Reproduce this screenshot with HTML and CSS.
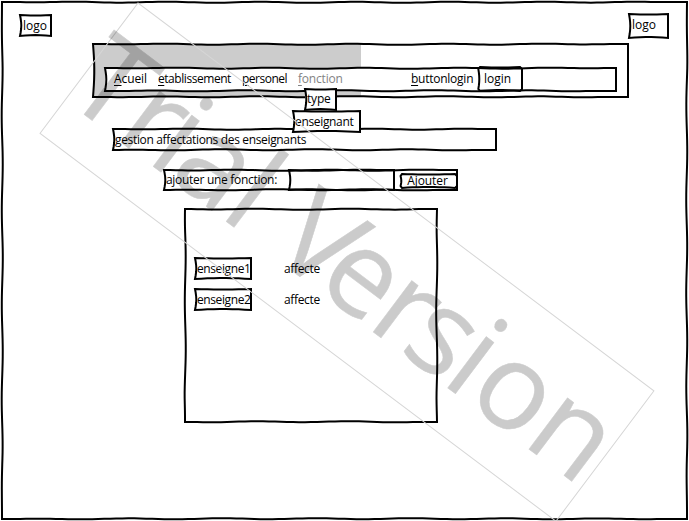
FILE: index.html
```html
<!DOCTYPE html>
<html lang="fr">
<head>
<meta charset="utf-8">
<title>Gestion affectations des enseignants</title>
<link rel="stylesheet" href="styles.css">
</head>
<body>
<main class="page sketch">
  <header class="top">
    <div class="logo sketch"><span>logo</span></div>
    <div class="banner sketch">
      <nav class="menubar sketch">
        <a class="item acueil"><u>A</u>cueil</a>
        <a class="item etab"><u>e</u>tablissement</a>
        <a class="item pers"><u>p</u>ersonel</a>
        <a class="item fonction"><u>f</u>onction</a>
        <a class="item blogin"><u>b</u>uttonlogin</a>
        <button class="login sketch round"><span>login</span></button>
        <div class="submenu">
          <div class="type sketch"><span>type</span></div>
          <div class="enseignant sketch"><span>enseignant</span></div>
        </div>
      </nav>
    </div>
    <div class="logo right sketch"><span>logo</span></div>
  </header>
  <h1 class="title sketch"><span>gestion affectations des enseignants</span></h1>
  <form class="add sketch">
    <label><span>ajouter une fonction:</span></label>
    <div class="field sketch"></div>
    <button type="button" class="submit sketch round"><span>Ajouter</span></button>
  </form>
  <section class="panel sketch">
    <div class="row"><div class="name sketch"><span>enseigne1</span></div><span class="state">affecte</span></div>
    <div class="row"><div class="name sketch"><span>enseigne2</span></div><span class="state">affecte</span></div>
  </section>
</main>
<svg class="watermark" width="689" height="521" viewBox="0 0 689 521">
  <g transform="translate(138 3) rotate(36.94)">
    <rect x="0" y="0" width="645.5" height="163"/>
    <text x="-4 60 100 127 191.5 220 253 311 375.5 416 468.7 499 570.4" y="121.5">Trial Version</text>
  </g>
</svg>
<script src="sketch.js"></script>
</body>
</html>
```
FILE: styles.css
```css
* { box-sizing: border-box; }
body {
  margin: 0;
  padding: 2px;
  width: 689px;
  height: 521px;
  overflow: hidden;
  position: relative;
  background: #fff;
  color: #000;
  font: 12px/16px "Open Sans", "Noto Sans", sans-serif;
  letter-spacing: -0.34px;
}
.page { width: 685px; height: 517px; }
.sketch { position: relative; }
.outline {
  position: absolute;
  left: 0;
  top: 0;
  overflow: visible;
  fill: none;
  stroke: #000;
  stroke-width: 2;
  pointer-events: none;
}
.top { display: flex; align-items: flex-start; height: 127px; padding-left: 18px; }
.logo { width: 31px; height: 21px; margin-top: 13px; padding: 3px 0 0 3px; letter-spacing: 0; }
.logo.right { width: 39px; height: 24px; margin: 12px 0 0 1px; }
.banner {
  width: 535px;
  height: 53px;
  margin: 42px 0 0 42px;
  padding: 24px 12px 6px;
  background: linear-gradient(to right, #ccc 268px, #fff 268px);
}
.menubar { display: flex; height: 23px; background: #fff; padding-left: 9px; }
.item { padding-top: 3px; white-space: nowrap; flex: none; }
.acueil { width: 44px; letter-spacing: -0.1px; }
.etab { width: 84px; letter-spacing: -0.45px; }
.pers { width: 56px; letter-spacing: -0.5px; }
.fonction { width: 113px; color: #838383; letter-spacing: -0.2px; }
.blogin { width: 67px; letter-spacing: -0.25px; }
u { text-decoration: underline; text-underline-offset: 2px; text-decoration-thickness: 1px; }
button { font: inherit; letter-spacing: 0; border: 0; padding: 0; margin: 0; background: #fff; color: #000; border-radius: 3px; }
.login { width: 44px; height: 24px; margin-top: -1px; text-align: left; padding: 0 0 0 6px; }
.submenu { position: absolute; left: 188px; top: 21px; z-index: 2; }
.type { width: 31px; height: 21px; margin-left: 12px; padding: 2px; background: #fff; letter-spacing: -0.2px; }
.enseignant { width: 67px; height: 21px; margin-top: 1px; padding: 3px 2px 0; background: #fff; }
.title { width: 383px; height: 21px; margin: 0 0 0 111px; padding: 3px 2px 0; font: inherit; }
.add { display: flex; width: 293px; height: 20px; margin: 20px 0 0 162px; }
.add label { width: 125px; padding: 2px 0 0 2px; white-space: nowrap; letter-spacing: -0.3px; }
.field { width: 105px; height: 20px; background: #fff; }
.submit { width: 57px; height: 14px; margin: 4px 0 0 6px; padding-right: 2px; line-height: 11px; letter-spacing: -0.1px; }
.submit span { position: relative; top: -1px; }
.panel { width: 252px; height: 213px; margin: 19px 0 0 183px; padding: 49px 0 0 10px; }
.row { display: flex; height: 31px; }
.name { width: 56px; height: 21px; padding: 3px 2px 0 2px; letter-spacing: -0.4px; }
.state { margin: 3px 0 0 33px; }
.watermark { position: absolute; left: 0; top: 0; z-index: 5; letter-spacing: 0; }
.watermark rect { fill: none; stroke: #d6d6d6; stroke-width: 1; }
.watermark text { font: 120px "Open Sans", sans-serif; fill: #000; stroke: #000; stroke-width: .5; opacity: .2; }
```
FILE: sketch.js
```js
// Draws a slightly wavering, hand-drawn outline around every .sketch box.
const NS = "http://www.w3.org/2000/svg";

function offset(side, d, len) {
  const t = d / len;
  if (len > 100) return Math.sin(Math.PI * t) * 0.3 + Math.sin(d / 15 + side) * 0.5 * Math.min(1, t * 8, (1 - t) * 8);
  const bow = [0.5, 0, 1, 1.3][side];
  return Math.sin(Math.PI * t) * bow;
}

document.querySelectorAll(".sketch").forEach(el => {
  const w = el.offsetWidth, h = el.offsetHeight;
  const r = el.classList.contains("round") ? 2 : 0;
  const pts = [];
  const add = (side, len, map) => {
    const n = Math.max(6, Math.round(len / 6));
    for (let i = 0; i <= n; i++) {
      const d = r + (len - 2 * r) * i / n;
      pts.push(map(d, offset(side, d, len)).map(v => v.toFixed(2)).join(" "));
    }
  };
  add(0, w, (d, o) => [d, o]);
  add(1, h, (d, o) => [w - o, d]);
  add(2, w, (d, o) => [w - d, h - o]);
  add(3, h, (d, o) => [o, h - d]);
  const svg = document.createElementNS(NS, "svg");
  svg.setAttribute("class", "outline");
  svg.setAttribute("width", w);
  svg.setAttribute("height", h);
  const path = document.createElementNS(NS, "path");
  path.setAttribute("d", "M" + pts.join("L") + "Z");
  svg.appendChild(path);
  el.appendChild(svg);
});
```
